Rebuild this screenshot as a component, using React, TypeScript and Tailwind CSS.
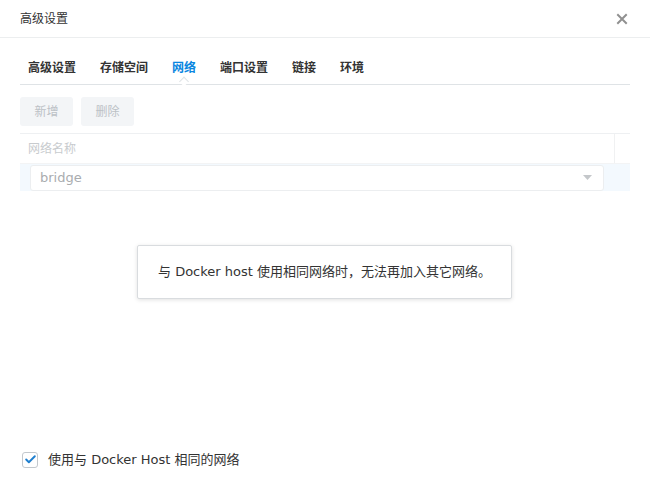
import { Check } from "lucide-react";

const font = "font-['DejaVu_Sans','Noto_Sans_CJK_SC',sans-serif]";

const tabs = ["高级设置", "存储空间", "网络", "端口设置", "链接", "环境"];

function CloseIcon() {
  return (
    <svg width="12" height="12" viewBox="0 0 12 12" aria-hidden>
      <path d="M2 2 L10 10 M10 2 L2 10" stroke="#909090" strokeWidth="2" strokeLinecap="square" />
    </svg>
  );
}

function Tabs({ active }: { active: string }) {
  return (
    <div className="relative flex h-[34px] items-center gap-6 border-b border-[#dfe3e6] pl-2">
      {tabs.map((tab) => (
        <span
          key={tab}
          className={`relative text-[12px] font-bold leading-none ${
            tab === active ? "text-[#0a86e0]" : "text-[#333]"
          }`}
        >
          {tab}
          {tab === active && (
            // little notch pointing up at the active tab, sitting on the rule
            <span className="absolute left-1/2 top-[16px] h-[7px] w-[7px] -translate-x-1/2 rotate-45 border-l border-t border-[#dfe3e6] bg-white" />
          )}
        </span>
      ))}
    </div>
  );
}

function Toolbar() {
  return (
    <div className="flex gap-2 pt-[12px] pb-[7px]">
      {["新增", "删除"].map((label) => (
        <button
          key={label}
          type="button"
          disabled
          className="flex h-[29px] w-[53px] items-center justify-center rounded-[3px] bg-[#f3f5f7] text-[12px] text-[#bcc1c6]"
        >
          {label}
        </button>
      ))}
    </div>
  );
}

function NetworkTable() {
  return (
    <div className="relative h-[300px] border-t border-[#eef0f2]">
      <div className="flex h-[30px] items-center border-b border-[#f3f4f5]">
        <span className="flex-1 pl-2 text-[12px] text-[#c8cbce]">网络名称</span>
        <span className="h-full w-[16px] border-l border-[#f0f1f2]" />
      </div>
      <div className="flex h-[27px] items-center bg-[#f3f9fe] pl-[10px] pr-[26px]">
        <div className="flex h-[26px] flex-1 items-center justify-between rounded-[3px] border border-[#eceef0] bg-white pl-[9px] pr-[11px]">
          <span className="text-[13px] text-[#a9acaf]">bridge</span>
          <svg width="9" height="6" viewBox="0 0 9 6" aria-hidden>
            <path d="M0 0 H9 L4.5 5 Z" fill="#c4c7ca" />
          </svg>
        </div>
      </div>
      <div className="absolute left-[117px] top-[111px] flex h-[54px] w-[375px] items-center justify-center rounded-[2px] border border-[#d9dcdf] bg-white shadow-[0_1px_4px_rgba(0,0,0,0.12)]">
        <span className="text-[13px] text-[#333]">与 Docker host 使用相同网络时，无法再加入其它网络。</span>
      </div>
    </div>
  );
}

export default function App() {
  return (
    <div className={`h-[477px] w-[650px] bg-white ${font}`}>
      <div className="flex h-[38px] items-center justify-between border-b border-[#eceeef] pl-5 pr-[22px]">
        <span className="text-[12px] text-[#333]">高级设置</span>
        <CloseIcon />
      </div>
      <div className="px-5 pt-[13px]">
        <Tabs active="网络" />
        <Toolbar />
        <NetworkTable />
        <label className="mt-[17px] flex items-center gap-[10px] pl-[2px]">
          <span className="flex h-[16px] w-[16px] items-center justify-center rounded-[3px] border border-[#c3c8cd] bg-white">
            <Check className="h-[13px] w-[13px] text-[#1f7fcf]" strokeWidth={3.5} aria-hidden />
          </span>
          <span className="text-[13px] text-[#333]">使用与 Docker Host 相同的网络</span>
        </label>
      </div>
    </div>
  );
}
